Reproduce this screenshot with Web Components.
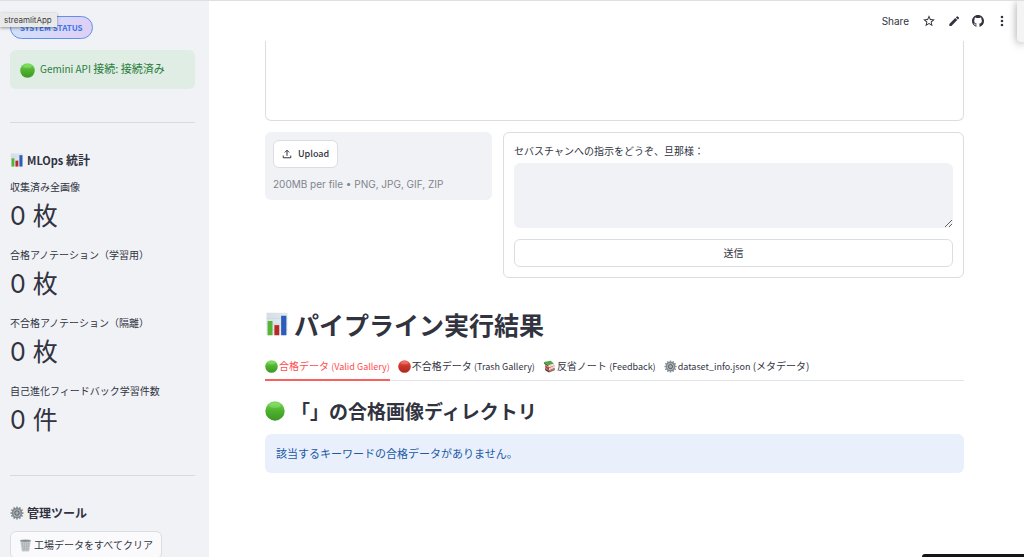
<!DOCTYPE html>
<html lang="ja">
<head>
<meta charset="utf-8">
<meta name="viewport" content="width=device-width, initial-scale=1">
<title>streamlitApp</title>
<style>
  body {
    margin: 0;
    font-family: "Noto Sans CJK JP", "Noto Sans", sans-serif;
    font-size: 10px;
    line-height: 18px;
    color: #31333f;
    background: #fff;
    --line: #dcdde1;
    --soft: #f0f2f6;
  }
  .latin-10 { font-size: 10px; }
  .latin-11 { font-size: 11px; }
</style>
</head>
<body>
<app-shell>
  <side-bar slot="side">
    <status-badge>SYSTEM STATUS</status-badge>
    <alert-box kind="success"><emoji-icon name="green" size="15"></emoji-icon><span><span class="latin-10">Gemini API</span> 接続: 接続済み</span></alert-box>
    <rule-line></rule-line>
    <section-title level="3" icon="chart"><span class="latin-11">MLOps</span> 統計</section-title>
    <metric-list>
      <metric-item label="収集済み全画像">0 枚</metric-item>
      <metric-item label="合格アノテーション（学習用）">0 枚</metric-item>
      <metric-item label="不合格アノテーション（隔離）">0 枚</metric-item>
      <metric-item label="自己進化フィードバック学習件数">0 件</metric-item>
    </metric-list>
    <rule-line></rule-line>
    <section-title level="3" icon="gear">管理ツール</section-title>
    <action-button class="clear"><emoji-icon name="trash" size="13"></emoji-icon>工場データをすべてクリア</action-button>
  </side-bar>
  <tool-bar slot="header"></tool-bar>
  <chat-history></chat-history>
  <input-columns>
    <file-uploader slot="first"></file-uploader>
    <prompt-form slot="second"></prompt-form>
  </input-columns>
  <section-title level="1" icon="chart">パイプライン実行結果</section-title>
  <tab-list></tab-list>
  <section-title level="2" icon="green">「」の合格画像ディレクトリ</section-title>
  <alert-box kind="info">該当するキーワードの合格データがありません。</alert-box>
</app-shell>

<script>
const define = (name, markup, setup) => {
  const template = document.createElement('template');
  template.innerHTML = '<style>*{box-sizing:border-box}:host{display:block;box-sizing:border-box}</style>' + markup;
  customElements.define(name, class extends HTMLElement {
    constructor() {
      super();
      this.attachShadow({ mode: 'open' }).append(template.content.cloneNode(true));
    }
    connectedCallback() { if (setup) setup(this, this.shadowRoot); }
  });
};

const ball = (id, a, b, c) => `<defs><linearGradient id="${id}" x1="0" y1="0" x2="0" y2="1"><stop offset="0" stop-color="${a}"/><stop offset=".45" stop-color="${b}"/><stop offset="1" stop-color="${c}"/></linearGradient></defs><circle cx="16" cy="16" r="15.500" fill="url(#${id})"/><ellipse cx="16" cy="7" rx="9" ry="4" fill="#fff" opacity=".16"/>`;
const teeth = Array.from({ length: 12 }, (_, i) => `<rect x="14" y="1" width="4" height="6" rx="1" transform="rotate(${i * 30} 16 16)"/>`).join('');
const emoji = {
  green: ball('g', '#7be05a', '#4fb52f', '#3f9427'),
  red: ball('r', '#f0685c', '#cf352b', '#a92a20'),
  chart: `<defs><linearGradient id="p" x1="0" y1="0" x2="1" y2="1"><stop offset="0" stop-color="#d3dde6"/><stop offset="1" stop-color="#eef1f4"/></linearGradient></defs><rect x="2" y="1" width="28" height="30" fill="url(#p)"/><path d="M2 8.500h28M2 16h28M2 23.500h28" stroke="#c3ccd5" stroke-width=".6"/><rect x="3.500" y="12" width="6.500" height="19" fill="#56b436"/><rect x="12.500" y="17.500" width="6.500" height="13.500" fill="#b82a26"/><rect x="21.500" y="5" width="7" height="26" fill="#2c5dbb"/>`,
  gear: `<g fill="#8a9298">${teeth}</g><circle cx="16" cy="16" r="10" fill="#c3c9ce" stroke="#7f888e" stroke-width="3.500"/><circle cx="16" cy="16" r="5" fill="#a9b1b7" stroke="#5d666d" stroke-width="2.500"/><path d="M16 6v5M16 21v5M6 16h5M21 16h5" stroke="#8a9298" stroke-width="1.500"/>`,
  trash: `<path d="M3 4h26l-4 26.500h-18z" fill="#c9cdd0"/><path d="M8 7l3 22M13 7l1 22M19 7l-1 22M24 7l-3 22M5 12h22M6 18h20M7 24h18" stroke="#999fa3" stroke-width="1" fill="none"/><ellipse cx="16" cy="4.500" rx="14" ry="3" fill="#a1a7ab"/><ellipse cx="16" cy="4.500" rx="11.500" ry="1.500" fill="#767d81"/>`,
  books: `<path d="M2 5l17-3 8 7-13 4z" fill="#55a548"/><path d="M2 5l12 8v4L3 10z" fill="#2f7a35"/><path d="M14 13l13-4v3l-13 5z" fill="#e6e2cf"/><path d="M5 12l10 6 14-5v1l-14 7-10-6z" fill="#e0474c"/><path d="M5 14l10 6v5L6 19z" fill="#c42f38"/><path d="M15 20l14-6v4l-14 7z" fill="#efd5c8"/><path d="M5 19l10 6 14-6v2l-14 6-10-6z" fill="#a83a3c"/><path d="M5 21l10 6v4L6 26z" fill="#4b3434"/><path d="M15 27l14-6v4l-14 6z" fill="#8a7160"/>`
};
define('emoji-icon', '<style>:host{display:inline-flex;flex:none}svg{display:block}</style><svg viewBox="0 0 32 32" aria-hidden="true"></svg>', (host, root) => {
  const svg = root.querySelector('svg');
  const size = host.getAttribute('size');
  svg.setAttribute('width', size);
  svg.setAttribute('height', size);
  svg.innerHTML = emoji[host.getAttribute('name')];
});

define('app-shell', `<style>
  :host{display:flex;height:100vh;overflow:hidden;position:relative;border-top:1px solid #dfdfe2}
  aside{flex:none;width:209px;background:var(--soft);overflow:hidden}
  .page{flex:1;min-width:0;overflow:hidden}
  main{padding:0 60px 0 56px}
  .tip{position:absolute;left:0;top:12px;padding:0 5px 0 4px;font:8px/14px Inter,sans-serif;color:#3c3c3f;background:#e9e9ea;box-shadow:0 1px 3px #0006}
  .edge{position:absolute;right:0;top:0;width:7px;height:41px;background:#f4f4f5;border-radius:0 0 0 4px;box-shadow:0 1px 8px #0006}
  .dock{position:absolute;right:0;bottom:0;width:102px;height:3px;background:#14131c;border-radius:3px 0 0 0}
</style>
<aside><slot name="side"></slot></aside>
<div class="page"><slot name="header"></slot><main><slot></slot></main></div>
<div class="tip" role="tooltip">streamlitApp</div><div class="edge"></div><div class="dock"></div>`);

define('side-bar', `<style>:host{padding:15px 14px 0 10px}</style><slot></slot>`);

define('status-badge', `<style>
  :host{display:flex;margin-bottom:11px}
  span{padding:0 9px;font-size:8px;font-weight:700;line-height:21px;color:#3b76e8;border:1px solid #5e90ee;border-radius:12px;background:linear-gradient(90deg,#d2e0fa,#dfcff5)}
</style><span><slot></slot></span>`);

define('alert-box', `<style>
  :host{display:flex;align-items:center;gap:5px;min-height:39px;padding:0 11px 2px;border-radius:6px;font-size:11px;line-height:18px}
  :host([kind=success]){background:#dfede5;color:#2b7d3c;padding:0 10px 2px}
  :host([kind=info]){background:#e9f0fc;color:#2159a5}
  ::slotted(emoji-icon){padding-top:4px}
</style><slot></slot>`);

define('rule-line', `<style>hr{margin:0;border:0;height:1px;background:#d8dadf}:host{padding:33px 0 27px}:host(:nth-of-type(n+2)){padding:37px 0 27px}</style><hr>`);

define('section-title', `<style>
  h1,h2,h3{display:flex;align-items:center;margin:0;font-weight:700}
  h1{font-size:25px;line-height:36px;gap:5px;padding:28px 0 15px}
  h2{font-size:19px;line-height:30px;gap:6px;padding:15px 0 8px}
  h3{font-size:12px;line-height:20px;gap:3px;padding:0 0 8px}
</style>`, (host, root) => {
  const level = host.getAttribute('level');
  const size = { 1: 24, 2: 20, 3: 14 }[level];
  const heading = document.createElement('h' + level);
  heading.innerHTML = `<emoji-icon name="${host.getAttribute('icon')}" size="${size}"></emoji-icon><span><slot></slot></span>`;
  root.append(heading);
});

define('metric-list', `<style>:host{display:grid;gap:10px;margin-bottom:-2px}</style><slot></slot>`);
define('metric-item', `<style>
  dl,dd{margin:0} dt{line-height:18px} dd{font-family:Inter,"Noto Sans CJK JP",sans-serif;font-size:25px;line-height:40px}
</style><dl><dt></dt><dd><slot></slot></dd></dl>`, (host, root) => {
  root.querySelector('dt').textContent = host.getAttribute('label');
});

define('action-button', `<style>
  :host{line-height:18px;font-size:10px;display:flex}
  button{display:inline-flex;align-items:center;justify-content:center;gap:2px;height:28px;padding:0 8px;font:inherit;color:inherit;background:#fff;border:1px solid var(--line);border-radius:6px}
  :host([wide]) button{width:100%}
  :host([upload]) button{gap:6px;font-size:9px;font-weight:500}
  :host(.clear) button{background:#fafafc}
</style><button type="button"><slot></slot></button>`);

define('tool-bar', `<style>
  :host{display:flex;justify-content:flex-end;align-items:center;gap:11px;height:40px;padding:0 15px 0 0}
  button{display:flex;padding:0;border:0;background:none;color:inherit;font:10px/18px Inter,sans-serif}
  .share{margin-right:2px}
  svg{display:block;fill:currentColor}
</style>
<button class="share">Share</button>
<button aria-label="Star"><svg width="14" height="14" viewBox="0 0 24 24"><path d="M22 9.240l-7.190-.62L12 2 9.190 8.630 2 9.240l5.460 4.730L5.820 21 12 17.270 18.180 21l-1.630-7.030L22 9.240zM12 15.400l-3.760 2.270 1-4.280-3.320-2.880 4.380-.38L12 6.100l1.710 4.040 4.380.38-3.320 2.880 1 4.280L12 15.400z"/></svg></button>
<button aria-label="Edit"><svg width="14" height="14" viewBox="0 0 24 24"><path d="M4 17v3.500h3.500L17.600 10.400l-3.500-3.500L4 17zM20.400 7.600a1 1 0 0 0 0-1.400l-2.100-2.100a1 1 0 0 0-1.400 0l-1.700 1.700 3.500 3.500 1.700-1.700z"/></svg></button>
<button aria-label="GitHub"><svg width="12" height="12" viewBox="0 0 16 16"><path d="M8 0C3.580 0 0 3.580 0 8c0 3.540 2.290 6.530 5.470 7.590.4.070.55-.17.55-.38 0-.19-.01-.82-.01-1.490-2.010.37-2.530-.49-2.690-.94-.09-.23-.48-.94-.82-1.130-.28-.15-.68-.52-.01-.53.63-.01 1.080.58 1.230.82.72 1.210 1.870.87 2.330.66.07-.52.28-.87.51-1.070-1.780-.2-3.640-.89-3.640-3.950 0-.87.31-1.590.82-2.150-.08-.2-.36-1.020.08-2.120 0 0 .67-.21 2.200.82.64-.18 1.320-.27 2-.27s1.360.09 2 .27c1.530-1.040 2.200-.82 2.200-.82.44 1.100.16 1.920.08 2.120.51.56.82 1.270.82 2.150 0 3.070-1.870 3.750-3.650 3.950.29.25.54.73.54 1.480 0 1.070-.01 1.930-.01 2.200 0 .21.15.46.55.38A8.010 8.010 0 0 0 16 8c0-4.420-3.580-8-8-8z"/></svg></button>
<button aria-label="Menu"><svg width="14" height="14" viewBox="0 0 24 24"><circle cx="12" cy="5" r="2.200"/><circle cx="12" cy="12" r="2.200"/><circle cx="12" cy="19" r="2.200"/></svg></button>`);

define('chat-history', `<style>:host{height:80px;border:1px solid var(--line);border-top:0;border-radius:0 0 6px 6px;margin-bottom:11px}</style>`);

define('input-columns', `<style>:host{display:grid;grid-template-columns:33fr 67fr;gap:11px;align-items:start}</style><slot name="first"></slot><slot name="second"></slot>`);

define('file-uploader', `<style>
  :host{background:var(--soft);border-radius:6px;padding:8px 8px 7px}
  p{margin:7px 0 0;font:10px/18px Inter,sans-serif;color:#82848d}
  svg{display:block}
</style>
<action-button upload><svg width="10" height="10" viewBox="0 0 16 16" fill="none" stroke="currentColor" stroke-width="1.600" aria-hidden="true"><path d="M8 11V2M4.500 5.500L8 2l3.500 3.500M2 10.500v3.500h12v-3.500"/></svg><span>Upload</span></action-button>
<p>200MB per file • PNG, JPG, GIF, ZIP</p>`);

define('prompt-form', `<style>
  form{border:1px solid var(--line);border-radius:6px;padding:9px 10px 10px}
  label{display:block;line-height:18px;margin-bottom:3px}
  textarea{display:block;width:100%;height:65px;border:0;border-radius:6px;padding:8px;background:var(--soft);font:inherit;color:inherit;resize:vertical;margin-bottom:11px}
</style>
<form><label for="prompt">セバスチャンへの指示をどうぞ、旦那様：</label><textarea id="prompt"></textarea><action-button wide>送信</action-button></form>`);

define('tab-list', `<style>
  div{display:flex;gap:8px;border-bottom:1px solid #e3e4e8}
  button{display:flex;align-items:center;gap:1px;padding:0 0 3px;margin-bottom:-1px;border:0;border-bottom:2px solid transparent;background:none;font:inherit;font-size:10px;line-height:18px;color:inherit;white-space:nowrap}
  small{font-size:9px}
  button[aria-selected=true]{color:#ff4b4b;border-bottom-color:#f9605d}
</style>
<div role="tablist">
<button role="tab" aria-selected="true"><emoji-icon name="green" size="13"></emoji-icon><span>合格データ <small>(Valid Gallery)</small></span></button>
<button role="tab" aria-selected="false"><emoji-icon name="red" size="13"></emoji-icon><span>不合格データ <small>(Trash Gallery)</small></span></button>
<button role="tab" aria-selected="false"><emoji-icon name="books" size="13"></emoji-icon><span>反省ノート <small>(Feedback)</small></span></button>
<button role="tab" aria-selected="false"><emoji-icon name="gear" size="13"></emoji-icon><span><small>dataset_info.json</small> (メタデータ)</span></button>
</div>`);
</script>
</body>
</html>
